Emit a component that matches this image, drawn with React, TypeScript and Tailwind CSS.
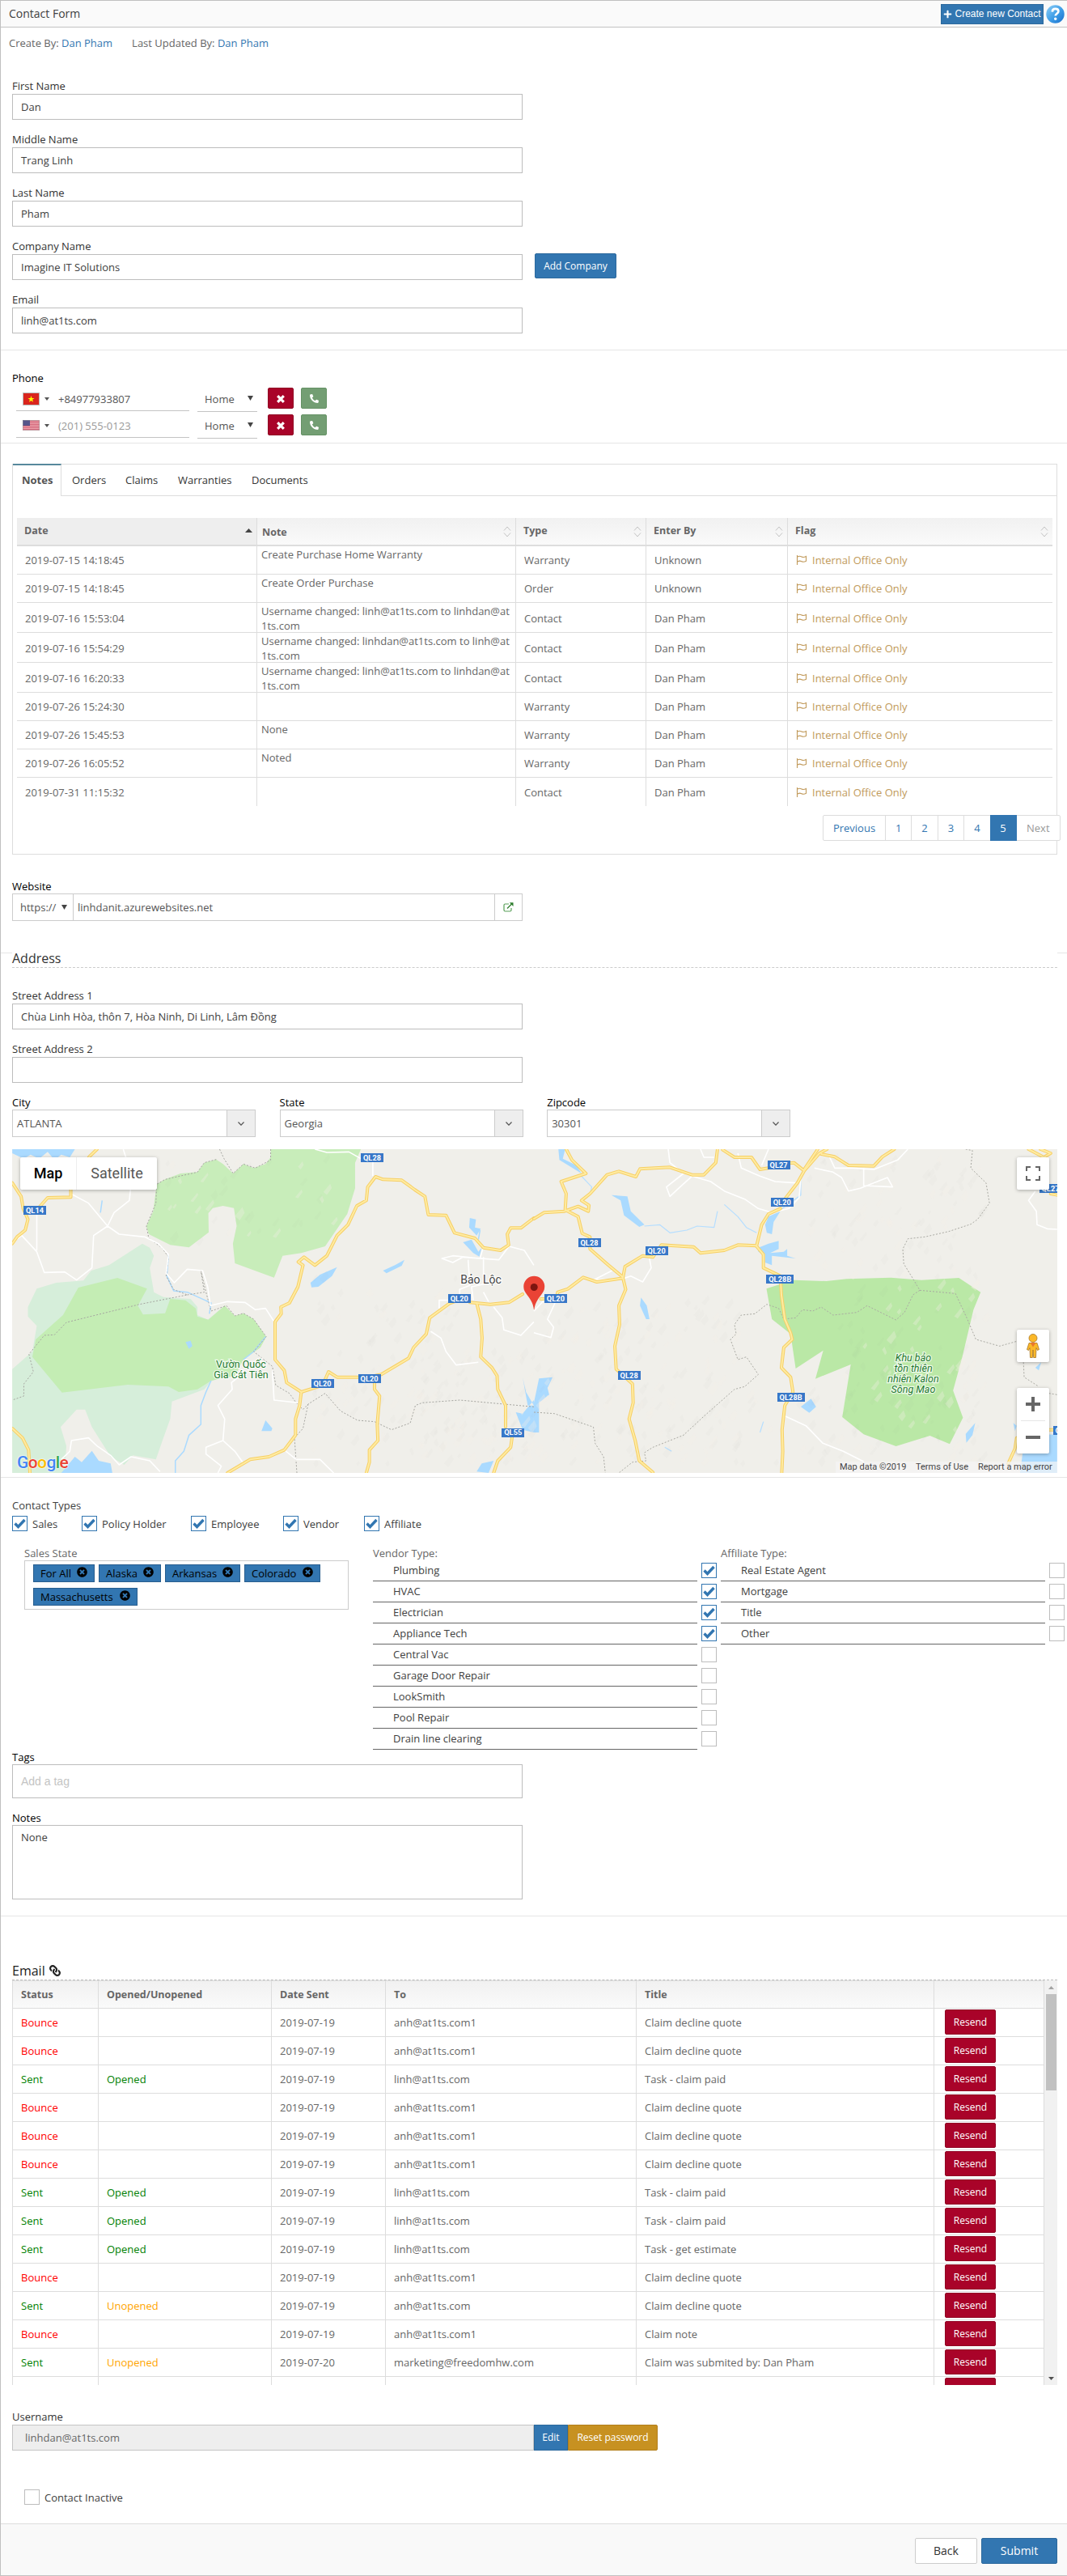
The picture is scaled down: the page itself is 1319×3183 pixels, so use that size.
import React from "react";
import { FaPlus, FaPhoneAlt, FaCheck, FaTimesCircle, FaLink } from "react-icons/fa";

const Caret = ({ className = "" }: { className?: string }) => (
  <svg className={className} width="7" height="6" viewBox="0 0 7 6">
    <path d="M0 0h7L3.5 6z" fill="#444" />
  </svg>
);

function Field({ label, value = "", children }: { label: string; value?: string; children?: React.ReactNode }) {
  return (
    <div className="h-[66px]">
      <div className="h-[19px] leading-[18px] text-[#333]">{label}</div>
      <div className="flex">
        <div className="h-8 w-[631px] border border-[#bdbdbd] bg-white px-2.5 leading-[31px] text-[#404040]">{value}</div>
        {children}
      </div>
    </div>
  );
}

const Hr = () => <div className="h-px bg-[#e5e5e5]" />;

function VietnamFlag() {
  return (
    <svg width="21" height="16" viewBox="0 0 21 16">
      <rect x=".5" y=".5" width="20" height="15" fill="#da251d" stroke="#b9b9b9" />
      <path d="M10.500 4.100l1 2.900h3l-2.400 1.800.9 2.900-2.500-1.800L8 11.700l.9-2.900-2.400-1.800h3z" fill="#ff0" />
    </svg>
  );
}

function UsFlag() {
  return (
    <svg width="21" height="13" viewBox="0 0 21 13">
      <rect width="21" height="13" fill="#eda5ae" />
      {[1, 3, 5, 7, 9, 11].map((y) => (
        <path key={y} d={`M0 ${y + 0.5}h21`} stroke="#d3667a" />
      ))}
      <rect width="9" height="7" fill="#55558a" />
      <rect x=".5" y=".5" width="20" height="12" fill="none" stroke="#9a9a9a" strokeOpacity=".5" />
    </svg>
  );
}

function PhoneRow({ flag, value, muted = false }: { flag: React.ReactNode; value: string; muted?: boolean }) {
  return (
    <div className="flex h-[33px] items-start pl-[5px]">
      <div className="flex h-[29px] w-[214px] items-center border-b border-[#c4c4c4] pb-px pl-2">
        {flag}
        <svg width="6" height="4" viewBox="0 0 6 4" className="ml-[6px]"><path d="M0 0h6L3 4z" fill="#555" /></svg>
        <span className={`ml-[11px] ${muted ? "text-[#999]" : "text-[#555]"}`}>{value}</span>
      </div>
      <div className="ml-2.5 flex h-[30px] w-[74px] items-center justify-between border-b border-[#c4c4c4] pr-[5px] pb-0.5 pl-[9px] text-[#555]">
        <span>Home</span>
        <Caret className="-mt-px" />
      </div>
      <div className="ml-[13px] flex h-[26px] w-8 items-center justify-center rounded-[2px] border border-[#900323] bg-[#a90329]">
        <svg width="10" height="10" viewBox="0 0 10 10" className="mt-0.5" stroke="#fff" strokeWidth="3.200"><path d="M1.200 1.200l7.600 7.600M8.800 1.200L1.200 8.800" /></svg>
      </div>
      <div className="ml-[9px] flex h-[26px] w-8 items-center justify-center rounded-[2px] border border-[#659265] bg-[#739e73] text-white">
        <FaPhoneAlt size={11} className="-scale-100 rotate-180" />
      </div>
    </div>
  );
}

const Flag = () => (
  <svg width="14" height="12" viewBox="0 0 14 12" fill="none" stroke="#c19a5b">
    <path d="M1.500 0v12M2 2c2-1.400 3.500-.8 5 0s3 .8 5.500-.5v5.800c-2.500 1.300-4 1.200-5.500.4S4 6.600 2 8" strokeWidth="1.100" />
  </svg>
);

const SortBoth = () => (
  <svg width="10" height="14" viewBox="0 0 10 14" fill="none" stroke="#c4c4c4">
    <path d="M1 5.500l4-4.500 4 4.500M1 8.500l4 4.500 4-4.500" />
  </svg>
);

const notes: [string, string, string, string][] = [
  ["2019-07-15 14:18:45", "Create Purchase Home Warranty", "Warranty", "Unknown"],
  ["2019-07-15 14:18:45", "Create Order Purchase", "Order", "Unknown"],
  ["2019-07-16 15:53:04", "Username changed: linh@at1ts.com to linhdan@at1ts.com", "Contact", "Dan Pham"],
  ["2019-07-16 15:54:29", "Username changed: linhdan@at1ts.com to linh@at1ts.com", "Contact", "Dan Pham"],
  ["2019-07-16 16:20:33", "Username changed: linh@at1ts.com to linhdan@at1ts.com", "Contact", "Dan Pham"],
  ["2019-07-26 15:24:30", "", "Warranty", "Dan Pham"],
  ["2019-07-26 15:45:53", "None", "Warranty", "Dan Pham"],
  ["2019-07-26 16:05:52", "Noted", "Warranty", "Dan Pham"],
  ["2019-07-31 11:15:32", "", "Contact", "Dan Pham"],
];

const noteGrid = "grid grid-cols-[296px_320px_161px_175px_328px]";

function NotesPanel() {
  return (
    <div className="mx-[15px] h-[483px] w-[1292px] border border-[#ddd]">
      <div className="flex h-[39px]">
        <div className="-mt-px h-10 w-[60px] border-t-2 border-r border-t-[#57889c] border-r-[#ddd] pl-[11px] leading-[37px] font-bold text-[#555]">Notes</div>
        <div className="flex flex-1 border-b border-[#ddd] pl-[13px] leading-[39px] text-[#333]">
          <span className="w-[66px]">Orders</span>
          <span className="w-[65px]">Claims</span>
          <span className="w-[91px]">Warranties</span>
          <span>Documents</span>
        </div>
      </div>
      <div className="mt-[27px] ml-[5px] w-[1280px] text-[#666]">
        <div className={`${noteGrid} h-[35px] border-b-2 border-[#ddd] bg-gradient-to-b from-[#f1f1f1] to-[#fafafa] text-[12.5px] font-bold`}>
          <div className="flex items-center justify-between bg-[#eee] pr-[5px] pl-[9px]">
            <span className="-mt-px">Date</span>
            <svg width="9" height="5" viewBox="0 0 9 5" className="-mt-[3px]"><path d="M4.500 0L9 5H0z" fill="#444" /></svg>
          </div>
          {["Note", "Type", "Enter By", "Flag"].map((h, i) => (
            <div key={h} className={`flex items-center justify-between border-l border-[#ddd] pr-[5px] ${i === 0 ? "pl-1.5" : "pl-[9px]"}`}>
              <span className={i === 0 ? "pt-[3px]" : "-mt-px"}>{h}</span>
              <SortBoth />
            </div>
          ))}
        </div>
        {notes.map(([date, note, type, by], i) => (
          <div key={i} className={`${noteGrid} ${i >= 2 && i <= 4 ? "h-[37px]" : "h-[35px]"} ${i < 8 ? "border-b border-[#ddd]" : ""}`}>
            <div className="flex items-center pl-2.5">{date}</div>
            <div className="border-l border-[#ddd] pt-px pr-1.5 pl-[5px] leading-[18px] break-all">{note}</div>
            <div className="flex items-center border-l border-[#ddd] pl-2.5">{type}</div>
            <div className="flex items-center border-l border-[#ddd] pl-2.5">{by}</div>
            <div className="flex items-center gap-1.5 border-l border-[#ddd] pl-2.5 text-[#c19a5b]">
              <Flag />
              Internal Office Only
            </div>
          </div>
        ))}
      </div>
      <div className="relative mt-[11px] ml-[1001px] flex h-8 w-[294px] rounded-[2px] border border-[#ddd] bg-white text-center leading-[31px] text-[#3276b1]">
        <span className="w-[76px]">Previous</span>
        {["1", "2", "3", "4"].map((n) => (
          <span key={n} className="w-[32.4px] border-l border-[#ddd]">{n}</span>
        ))}
        <span className="-my-px w-[33px] bg-[#3276b1] leading-[33px] text-white">5</span>
        <span className="flex-1 text-[#999]">Next</span>
      </div>
    </div>
  );
}

/* ---------- map ---------- */

// Faint relief shading: [x0, y0, width, height, count]
const reliefZones = [
  [370, 160, 190, 230, 110],
  [500, 250, 150, 140, 90],
  [650, 190, 250, 200, 160],
  [980, 10, 220, 150, 90],
  [1020, 170, 180, 180, 90],
  [900, 300, 300, 90, 50],
  [180, 10, 230, 110, 40],
];

const relief = (() => {
  let s = 7;
  const r = () => ((s = (s * 16807) % 2147483647) / 2147483647);
  const out: { d: string; light: boolean }[] = [];
  for (const [x, y, w, h, n] of reliefZones)
    for (let i = 0; i < n; i++) {
      const px = x + r() * w;
      const py = y + r() * h;
      const a = 3 + r() * 7;
      const b = 2 + r() * 4;
      out.push({ d: `M${px.toFixed(1)} ${py.toFixed(1)}l${a.toFixed(1)} ${(-a * 1.2).toFixed(1)}l${(b / 2).toFixed(1)} ${(b * 1.3).toFixed(1)}l${(-a * 0.7).toFixed(1)} ${a.toFixed(1)}z`, light: r() > 0.6 });
    }
  return out;
})();

const shields: [number, number, string][] = [
  [445, 10.7, "QL28"], [28, 75.7, "QL14"], [552.8, 184.7, "QL20"], [383.6, 289.3, "QL20"], [441.6, 283.3, "QL20"], [619.3, 350, "QL55"],
  [947.6, 19.7, "QL27"], [951.8, 65.7, "QL20"], [713.5, 115.7, "QL28"], [796.7, 125.7, "QL20"], [949.3, 160.7, "QL28B"], [671.9, 184.7, "QL20"],
  [762.7, 279.3, "QL28"], [962.7, 306.3, "QL28B"], [1283.5, 48.3, "QL27"], [1301, 347.3, "QL1A"],
];

const roadsLeft = [
  "M285 60L262 88 250 120M208 205L208 238 140 240 108 285M36 185L62 235 68 280 82 320 74 360 50 385 36 410",
  "M36 1095L66 1130 84 1175 88 1260",
  "M1568 315L1530 352 1500 352 1490 375 1494 415 1470 435 1420 425 1395 390 1335 370 1310 305 1258 303 1248 235 1218 210 1180 175 1125 172 1103 162 1080 200 1076 250 1048 270 1022 340 990 380 960 455 925 490 893 460 876 478 890 490 875 570 850 630 825 645 826 670 808 700 808 840 835 880 842 925 885 960 935 940",
  "M885 960L880 1010 868 1060 868 1120 835 1175 790 1200 735 1210 668 1260",
  "M950 928L965 885 990 905 1080 905 1120 895 1200 835 1215 795 1252 745 1262 685 1320 632 1350 618",
  "M1380 628L1440 635 1495 628 1535 597M1400 630L1412 690 1416 760 1412 830 1445 870 1460 900 1462 950 1485 1010 1485 1090M1505 1120L1500 1165 1462 1215 1450 1260",
  "M1100 920L1100 950 1115 975 1108 1080 1110 1140 1085 1175 1085 1220 1076 1260",
];

const roadsRight = [
  "M0 318L30 295 90 290 130 272 160 290 162 268 140 250 165 225 215 155 250 142 300 162 312 133 400 127 465 155 500 155 535 110 540 60",
  "M95 60L112 100 153 150 80 180 95 225 92 285 130 310 142 372 165 385 165 430 215 485 262 535",
  "M262 535L268 495 320 455 350 460 375 415 470 422 490 445 560 435 600 415 655 418 670 340 690 300 725 280M735 250L775 185 795 140 840 75 862 60M795 140L765 110 750 112M690 130L665 135 640 90 590 90 555 62",
  "M845 78L885 88 925 120 1000 122 1025 88 1060 60M835 60L795 135",
  "M20 615L65 615 70 590 100 578 145 535 185 552 262 538 270 580 250 640 252 710 238 790 242 875 290 930 292 1000 280 1060 298 1140 310 1215 350 1258",
  "M655 420L675 450 675 500 725 530 728 600 738 690 755 740 760 765 735 795 728 870 755 905 762 960 738 1010 730 1100 732 1180 729 1260",
  "M1455 60L1500 90 1520 75 1490 60M1420 1130L1415 1170 1395 1225M1515 1100L1539 1100M1520 225L1539 230",
];

const minorLeft = [
  "M208 225L260 260 316 345 275 380 270 500 225 545 190 515 130 517 108 440 64 380 36 405M108 300L108 435M316 345L335 295 380 250 384 200M316 345L350 375 425 385 465 410 495 450 488 520 512 555 550 505 595 510 610 570 618 640 668 625 720 628 750 655 780 650 808 705",
  "M362 60L372 100 372 130M1095 160L1095 100 1060 95 1025 70 960 72 925 60M1568 490L1540 435 1495 420 1465 470 1360 460 1330 480 1298 465 1330 455 1410 465 1420 420M1375 470L1380 565 1350 580 1350 620 1290 620 1290 650M1420 460L1420 560 1385 570 1390 620M1420 590L1435 625",
  "M1265 735L1295 760 1310 810 1340 860 1405 850M1450 645L1475 685 1480 730 1530 750 1568 700M720 885L680 925 682 950 640 1010 660 1060 655 1140 605 1165 605 1190 650 1235 640 1260M655 1140L690 1180 715 1225M800 880L805 990 875 1000M835 1175L870 1210 940 1210 980 1260",
  "M180 1210L205 1180 210 1140 260 1130 285 1160 325 1195 350 1230 385 1200 440 1215 470 1255",
];
const minorRight = [
  "M395 60L400 110 440 150 390 200 400 235 430 200 465 160 520 180 560 215 620 245 660 280 700 295 750 280 780 240 785 170M600 75L610 130 665 160 710 180 770 185M690 60L670 120",
  "M490 60L500 90 530 90M825 130L880 145 905 165 925 215 960 205 1040 165 1055 200 970 195 970 130M870 90L885 130 940 130 1000 135 1070 100 1100 60",
  "M340 465L345 500 320 552 285 530 262 540M262 540L175 545 230 510M0 660L30 620M62 630L40 690 58 720 50 758 0 740M740 1050L800 1085 850 1150 910 1180 970 1218M1475 215L1455 250 1478 290 1480 340 1510 355 1539 357",
];

const waterLeft = [
  "M36 75L70 95 90 80 115 95 140 70 160 100 180 80 205 90 220 60 36 60z",
  "M180 1260L220 1200 240 1220 270 1178 290 1215 325 1225 330 1260z",
  "M912 555L940 525 990 497 975 530 935 570 915 572zM1125 510L1160 490 1188 470 1180 492 1135 520zM780 1065L800 1095 797 1105 768 1105zM545 775L555 800 565 790 560 770z",
  "M1360 405L1385 395 1405 440 1415 425 1408 458 1390 445zM1380 315L1398 320 1395 350 1412 355 1400 380 1378 350zM1568 990L1535 1040 1515 1035 1535 1100 1568 1110zM1400 1255L1415 1225 1450 1215 1435 1260zM1535 905L1545 960 1568 1010 1550 1010z",
];
const waterRight = [
  "M228 230L275 235 285 290 325 340 310 348 265 305 255 250zM72 60L92 60 85 95 125 120 140 150 75 100zM315 610L332 640 340 690 330 690 312 640z",
  "M690 310L725 290 705 330 700 375 685 370 680 340zM660 425L690 410 720 400 720 430 695 445 735 440 745 430 745 455 770 465 700 455 700 490 680 480 680 450 660 440z",
  "M15 910L55 905 40 945 45 970 15 1000 15 1110 0 1110 0 1000zM785 1015L815 985 830 1015 810 1037zM1445 1115L1539 1118 1539 1260 1430 1260zM1270 1115L1298 1075 1290 1120 1272 1148zM1475 870L1492 850 1485 880zM1410 1075L1420 1085 1415 1105z",
];

const roadSet = (ds: string[], key: string) => (
  <g fill="none" strokeLinejoin="round" strokeLinecap="round">
    {ds.map((d, i) => <path key={key + "a" + i} d={d} stroke="#f6cf65" strokeWidth="4" vectorEffect="non-scaling-stroke" />)}
    {ds.map((d, i) => <path key={key + "b" + i} d={d} stroke="#ffeba1" strokeWidth="2" vectorEffect="non-scaling-stroke" />)}
  </g>
);
const lineSet = (ds: string[], stroke: string, width: number, dash?: string) => (
  <g fill="none" stroke={stroke} strokeWidth={width} strokeDasharray={dash} strokeLinejoin="round">
    {ds.map((d, i) => <path key={i} d={d} vectorEffect="non-scaling-stroke" />)}
  </g>
);

function MapDrawing() {
  return (
    <svg width="1292" height="400" viewBox="0 0 1292 400" className="block" fontFamily="Roboto, sans-serif">
      <rect width="1292" height="400" fill="#f0efea" />
      <g transform="translate(-15 -20) scale(.42087 .33333)">
        <path d="M418 410L440 425 452 455 440 500 452 590 480 608 560 615 580 645 580 675 610 692 660 640 700 880 620 920 600 950 505 995 500 1060 480 1130 458 1210 390 1195 365 1230 325 1200 300 1150 270 1090 250 1025 225 1025 178 1090 195 1160 190 1260 36 1260 36 875 95 810 108 715 82 680 82 645 108 577 165 555 245 547 268 510 320 490z" fill="#d6eeda" />
        <path d="M345 537L432 577 405 640 420 673 485 668 500 615 545 620 575 650 580 680 612 692 660 640 690 678 715 668 745 690 782 755 765 795 715 840 690 900 620 918 580 950 525 960 495 940 375 933 182 962 95 830 105 765 185 675 230 573z" fill="#c4edb4" />
        <path d="M795 60L1060 60 1043 110 1043 205 1020 300 955 420 885 445 830 455 805 536 690 483 684 410 695 345 687 278 655 270 625 278 612 297 613 368 555 424 500 415 437 375 430 345 450 290 460 190 485 172 530 150 580 145 600 110 635 98 655 115 685 150 715 115 745 130 780 115 795 90z" fill="#c8edba" />
        {waterLeft.map((d, i) => <path key={i} d={d} fill="#aadaff" />)}
        {lineSet(["M620 918L605 960 590 1010 590 1080 555 1120 540 1180 515 1215 515 1260", "M495 450L490 530 510 585 550 590 620 630 615 670M295 295L300 250", "M1410 360L1405 395M780 755L745 810 715 840"], "#aadaff", 1.5)}
      </g>
      <g transform="translate(645 -20) scale(.42027 .33333)">
        <path d="M684 577L725 560 765 545 860 549 920 541 1050 536 1140 545 1250 537 1314 590 1293 655 1260 830 1233 955 1262 1055 1223 1153 1165 1122 1065 1161 970 1117 907 1053 932 858 828 911 851 806 770 873 755 745 700 690z" fill="#bae8a6" />
        {waterRight.map((d, i) => <path key={i} d={d} fill="#aadaff" />)}
        {lineSet(["M325 345L370 340 400 370 450 360 480 345 530 350 540 290M560 265L600 310 625 350 655 370M140 160L170 200 165 230M785 170L785 230 725 285", "M675 1070L665 1110M385 1165L405 1180"], "#b5deff", 1.2)}
      </g>
      {relief.map((t, i) => <path key={i} d={t.d} fill={t.light ? "#f6efe8" : "#777"} fillOpacity={t.light ? 0.3 : 0.022} />)}
      <g transform="translate(-15 -20) scale(.42087 .33333)">
        {lineSet(["M645 60L658 95 685 150 715 115 750 130 795 100 795 60M635 98L600 110 580 145 485 172 460 190 458 260 430 345 437 390 475 425 495 460 488 530 510 580 550 600 410 635 195 702 160 748 130 750 85 820 98 885 70 930 70 975 36 990M550 600L600 590 590 510 605 590 620 660 665 640 690 678 715 668 745 690 782 755 745 810 800 865 810 935 850 965 870 1000 890 1025 905 1005 955 965 1000 1030 1050 1065 1100 1070 1150 1100 1205 1075 1220 1010 1240 1000 1350 990 1568 1015M905 1005L890 1095 865 1130 872 1260"], "#a5a5a0", 1, "2 2")}
        {lineSet(minorLeft, "#fff", 1.6)}
        {roadSet(roadsLeft, "l")}
      </g>
      <g transform="translate(645 -20) scale(.42027 .33333)">
        {lineSet(["M1270 60L1290 65 1285 130 1330 185 1340 260 1305 320 1285 338 1220 365 1150 385 1100 392 1085 430 1088 485 1115 540 1135 583 1240 595 1275 690 1300 765 1370 790 1440 765M1135 583L1115 600 1090 665 1065 693 980 640 950 665 880 675 845 645 820 660 790 655 770 685 735 690 720 650 685 635 650 670 610 675 590 710 595 745 578 765 600 840 625 830 660 895 620 940 590 950 500 1050 440 1120 350 1165 325 1185 330 1215 290 1220 250 1260M0 1035L60 1040 175 1090 180 1150 205 1200 210 1260M1440 850L1442 905 1485 940M1515 965L1539 970"], "#a9a9a2", 1, "2 2")}
        {lineSet(minorRight, "#fff", 1.6)}
        {roadSet(roadsRight, "r")}
      </g>
      {shields.map(([x, y, t], i) => {
        const w = t === "QL28B" ? 34 : 28;
        return (
          <g key={i}>
            <rect x={Math.round(x - w / 2)} y={Math.round(y - 5.5)} width={w} height="11" fill="#3777c8" />
            <text x={x} y={y + 3.3} textAnchor="middle" fontSize="9.2" fontWeight="700" fill="#fff" letterSpacing=".1">{t}</text>
          </g>
        );
      })}
      <g fill="#1f7a30" stroke="#fff" strokeOpacity=".75" strokeWidth="2.500" paintOrder="stroke" textAnchor="middle" fontSize="12.500">
        <text x="283" y="269.500">Vườn Quốc</text>
        <text x="283" y="282.500">Gia Cát Tiên</text>
        <g fontStyle="italic">
          <text x="1114" y="261.500">Khu bảo</text>
          <text x="1114" y="274.500">tồn thiên</text>
          <text x="1114" y="287.500">nhiên Kalon</text>
          <text x="1114" y="300.500">Sông Mao</text>
        </g>
      </g>
      <text x="579.500" y="166" textAnchor="middle" fontSize="14" fill="#444" stroke="#fff" strokeOpacity=".8" strokeWidth="2.500" paintOrder="stroke">Bảo Lộc</text>
      <path d="M645 198.500c-1-10-6-15-10.500-21.500a13 13 0 1 1 21.500 0C651.500 183.500 646.500 188.500 645.300 198.500z" fill="#ea4335" />
      <circle cx="645.200" cy="170.500" r="4.500" fill="#7d1510" />
    </svg>
  );
}

function MapPanel() {
  const card = "rounded-[2px] bg-white shadow-[0_1px_4px_rgba(0,0,0,0.3)]";
  return (
    <div className="relative mx-[15px] mt-[15px] h-[400px] w-[1292px] overflow-hidden font-[Roboto,sans-serif]">
      <MapDrawing />
      <div className={`${card} absolute top-2.5 left-2.5 flex h-10 text-center text-[18px] leading-10`}>
        <span className="w-[70px] border-r border-[#eee] font-medium text-black">Map</span>
        <span className="w-[99px] text-[#565656]">Satellite</span>
      </div>
      <div className={`${card} absolute top-2.5 right-2.5 flex h-10 w-10 items-center justify-center`}>
        <svg width="18" height="18" viewBox="0 0 18 18" fill="none" stroke="#666" strokeWidth="2"><path d="M1 6V1h5M12 1h5v5M17 12v5h-5M6 17H1v-5" /></svg>
      </div>
      <div className={`${card} absolute top-[223px] right-2.5 flex h-10 w-10 items-center justify-center`}>
        <svg width="18" height="30" viewBox="0 0 18 30" fill="#fbb829" stroke="#a6772a" strokeWidth=".8">
          <path d="M4 11.500h10l2.500 8-2 1-1.500-3-.5 12H9.700L9 20l-.7 9.500H5.500l-.5-12-1.500 3-2-1z" />
          <circle cx="9" cy="5.500" r="5" />
          <path d="M5.500 11h7L9 16.500z" fill="#e8772e" stroke="none" />
        </svg>
      </div>
      <div className={`${card} absolute top-[295px] right-2.5 flex h-[81px] w-10 flex-col items-center`}>
        <svg width="40" height="81" viewBox="0 0 40 81" stroke="#666" strokeWidth="4"><path d="M11 20h18M20 11v18M11 61h18" /><path d="M5 40.500h30" stroke="#e6e6e6" strokeWidth="1" /></svg>
      </div>
      <div className="absolute bottom-0 left-[6px] text-[21px] leading-[26px] font-medium tracking-[-0.6px] [text-shadow:0_0_2px_#fff,0_0_2px_#fff]">
        <span className="text-[#4285f4]">G</span><span className="text-[#ea4335]">o</span><span className="text-[#fbbc05]">o</span><span className="text-[#4285f4]">g</span><span className="text-[#34a853]">l</span><span className="text-[#ea4335]">e</span>
      </div>
      <div className="absolute right-0 bottom-0 flex h-3.5 bg-[#f5f5f5]/70 text-[11px] leading-[14px] whitespace-nowrap text-[#444]">
        <span className="w-[94px] pl-[5px]">Map data ©2019</span>
        <span className="w-[77px] pl-[5px]">Terms of Use</span>
        <span className="w-[103px] pl-[5px]">Report a map error</span>
      </div>
    </div>
  );
}

/* ---------- contact types ---------- */

function Check({ on }: { on: boolean }) {
  return (
    <span className={`flex h-[19px] w-[19px] shrink-0 items-center justify-center border bg-white text-[#3276b1] ${on ? "border-[#3276b1]" : "border-[#bdbdbd]"}`}>
      {on && (
        <svg width="15" height="13" viewBox="0 0 15 13" fill="none" stroke="currentColor" strokeWidth="3.400"><path d="M1.500 6.500l4 4L13.500 2" /></svg>
      )}
    </span>
  );
}

function TypeList({ title, items, checked }: { title: string; items: string[]; checked: number }) {
  return (
    <div className="w-[430px] shrink-0">
      <div className="h-[18px] leading-[18px]">{title}</div>
      {items.map((t, i) => (
        <div key={t} className="flex h-[26px]">
          <div className="h-[26px] w-[401px] border-b border-[#666] pl-[25px] leading-[25px] text-[#404040]">{t}</div>
          <div className="pt-[3px] pl-[5px]"><Check on={i < checked} /></div>
        </div>
      ))}
    </div>
  );
}

const Chip = ({ text, width }: { text: string; width: string }) => (
  <span className={`flex h-[22px] items-center justify-between border border-[#285e8e] bg-[#3276b1] pr-2 pl-2 text-black ${width}`}>
    {text}
    <FaTimesCircle size={13} className="-mt-1" />
  </span>
);

/* ---------- email table ---------- */

const S = "Sent";
const B = "Bounce";
const emails: [string, string, string, string, string][] = [
  [B, "", "2019-07-19", "anh@at1ts.com1", "Claim decline quote"],
  [B, "", "2019-07-19", "anh@at1ts.com1", "Claim decline quote"],
  [S, "Opened", "2019-07-19", "linh@at1ts.com", "Task - claim paid"],
  [B, "", "2019-07-19", "anh@at1ts.com1", "Claim decline quote"],
  [B, "", "2019-07-19", "anh@at1ts.com1", "Claim decline quote"],
  [B, "", "2019-07-19", "anh@at1ts.com1", "Claim decline quote"],
  [S, "Opened", "2019-07-19", "linh@at1ts.com", "Task - claim paid"],
  [S, "Opened", "2019-07-19", "linh@at1ts.com", "Task - claim paid"],
  [S, "Opened", "2019-07-19", "linh@at1ts.com", "Task - get estimate"],
  [B, "", "2019-07-19", "anh@at1ts.com1", "Claim decline quote"],
  [S, "Unopened", "2019-07-19", "anh@at1ts.com", "Claim decline quote"],
  [B, "", "2019-07-19", "anh@at1ts.com1", "Claim note"],
  [S, "Unopened", "2019-07-20", "marketing@freedomhw.com", "Claim was submited by: Dan Pham"],
];

const emailGrid = "grid grid-cols-[106px_214px_141px_310px_368px_136px]";
const cell = "border-l border-[#ddd] pl-2.5";
const Resend = () => (
  <div className="mt-px ml-[3px] h-[31px] w-[63px] rounded-[2px] border border-[#900323] bg-[#a90329] text-center text-[12px] leading-[29px] text-white">Resend</div>
);

function EmailTable() {
  return (
    <div className="flex h-[500px] w-[1292px] overflow-hidden text-[#666]">
      <div className="w-[1275px]">
        <div className={`${emailGrid} h-[35px] border-t border-b border-[#ddd] bg-gradient-to-b from-[#f1f1f1] to-[#fafafa] text-[12.5px] leading-[33px] font-bold`}>
          {["Status", "Opened/Unopened", "Date Sent", "To", "Title", ""].map((h) => <div key={h} className={cell}>{h}</div>)}
        </div>
        {emails.map(([st, op, date, to, title], i) => (
          <div key={i} className={`${emailGrid} h-[35px] border-b border-[#ddd] leading-[35px]`}>
            <div className={`${cell} ${st === S ? "text-[#008000]" : "text-[#ff0000]"}`}>{st}</div>
            <div className={`${cell} ${op === "Opened" ? "text-[#008000]" : "text-[#ffa500]"}`}>{op}</div>
            <div className={cell}>{date}</div>
            <div className={cell}>{to}</div>
            <div className={cell}>{title}</div>
            <div className={cell}><Resend /></div>
          </div>
        ))}
        <div className={`${emailGrid} h-[35px]`}>
          {[0, 1, 2, 3, 4].map((k) => <div key={k} className={cell} />)}
          <div className={cell}><Resend /></div>
        </div>
      </div>
      <div className="flex w-[17px] flex-col items-center justify-between border-l border-[#ddd] bg-[#f1f1f1]">
        <div className="flex flex-col items-center">
          <div className="flex h-[17px] items-center"><svg width="7" height="4" viewBox="0 0 7 4"><path d="M3.500 0L7 4H0z" fill="#a3a3a3" /></svg></div>
          <div className="h-[119px] w-[13px] bg-[#c1c1c1]" />
        </div>
        <div className="flex h-[17px] items-center"><svg width="7" height="4" viewBox="0 0 7 4"><path d="M0 0h7L3.500 4z" fill="#505050" /></svg></div>
      </div>
    </div>
  );
}

function Combo({ label, value }: { label: string; value: string }) {
  return (
    <div className="w-[301px]">
      <div className="h-[17px] leading-[17px] text-black">{label}</div>
      <div className="flex h-[34px] border border-[#ccc] leading-[33px] text-[#555]">
        <span className="flex-1 pl-[5px]">{value}</span>
        <span className="flex w-[35px] items-center justify-center border-l border-[#ccc] bg-[#eee]">
          <svg width="8" height="5" viewBox="0 0 8 5" fill="none" stroke="#555" strokeWidth="1.200"><path d="M.5.5L4 4.200 7.500.5" /></svg>
        </span>
      </div>
    </div>
  );
}

export default function App() {
  return (
    <div className="h-[3183px] w-[1319px] overflow-hidden border-t border-l border-[#c0c0c0] bg-white font-['Open_Sans',sans-serif] text-[13px] leading-[18px] text-[#666]">
      <div className="-ml-px">
        <header className="ml-px flex h-[33px] items-center border-b border-[#c2c2c2] bg-[#fafafa] pr-[3px] pl-2.5">
          <h1 className="flex-1 text-[14px] text-[#404040]">Contact Form</h1>
          <div className="flex h-[25px] w-[127px] items-center justify-center gap-[3px] border border-[#2c699d] bg-[#3276b1] font-['Liberation_Sans',sans-serif] text-[12px] whitespace-nowrap text-white">
            <FaPlus size={11} />
            Create new Contact
          </div>
          <svg className="ml-[3px]" width="23" height="23" viewBox="0 0 23 23">
            <defs>
              <linearGradient id="help" x1="0" y1="0" x2="1" y2="1"><stop offset="0" stopColor="#8fd0f8" /><stop offset=".55" stopColor="#3c9be6" /><stop offset="1" stopColor="#1a6fcb" /></linearGradient>
            </defs>
            <circle cx="11.500" cy="11.500" r="11.200" fill="url(#help)" />
            <path d="M7.800 8.600C7.900 6 9.600 4.900 11.600 4.900c2.200 0 3.800 1.200 3.800 3.100 0 2.600-3.700 2.900-3.700 5.600" fill="none" stroke="#fff" strokeWidth="2.700" />
            <circle cx="11.700" cy="17.200" r="1.700" fill="#fff" />
          </svg>
        </header>

        <div className="flex h-[63px] gap-6 pt-2.5 pl-[11px]">
          <span>Create By: <span className="text-[#3276b1]">Dan Pham</span></span>
          <span>Last Updated By: <span className="text-[#3276b1]">Dan Pham</span></span>
        </div>

        <div className="h-[335px] pl-[15px]">
          <Field label="First Name" value="Dan" />
          <Field label="Middle Name" value="Trang Linh" />
          <Field label="Last Name" value="Pham" />
          <Field label="Company Name" value="Imagine IT Solutions">
            <div className="-mt-px ml-[15px] h-[31px] w-[101px] rounded-[2px] border border-[#2c699d] bg-[#3276b1] text-center text-[12px] leading-[30px] text-white">Add Company</div>
          </Field>
          <Field label="Email" value="linh@at1ts.com" />
        </div>
        <Hr />
        <div className="h-[114px] pt-[25px] pl-[15px]">
          <div className="h-[21px] text-black">Phone</div>
          <PhoneRow flag={<VietnamFlag />} value="+84977933807" />
          <PhoneRow flag={<UsFlag />} value="(201) 555-0123" muted />
        </div>
        <Hr />
        <div className="h-[25px]" />
        <NotesPanel />

        <div className="h-[121px] pt-[30px] pl-[15px]">
          <div className="h-[18px] text-black">Website</div>
          <div className="flex h-[34px] w-[631px] border border-[#ccc] leading-[33px] text-[#555]">
            <span className="flex w-[75px] items-center justify-between border-r border-[#ccc] pr-[7px] pl-[9px]">https://<Caret /></span>
            <span className="flex-1 pl-[5px]">linhdanit.azurewebsites.net</span>
            <span className="flex w-[34px] items-center justify-center border-l border-[#ccc]">
              <svg width="13" height="12" viewBox="0 0 13 12" fill="none" stroke="#58a058" strokeWidth="1.200">
                <path d="M7 2H2.500Q1 2 1 3.500v6Q1 11 2.500 11h6Q10 11 10 9.500V7" />
                <path d="M5 7.500L11 1.500" stroke="#2d7d2d" />
                <path d="M7.800.2H12.500V5z" fill="#2d7d2d" stroke="none" />
              </svg>
            </span>
          </div>
        </div>
        <div className="flex h-[19px]">
          <div className="h-px w-[15px] bg-[#e5e5e5]" />
          <h2 className="h-[19px] w-[1292px] border-b border-dashed border-[#ccc] text-[16px] leading-[14px] text-[#333]">Address</h2>
          <div className="h-px flex-1 bg-[#e5e5e5]" />
        </div>
        <div className="h-[158px] pt-[25px] pl-[15px]">
          <Field label="Street Address 1" value="Chùa Linh Hòa, thôn 7, Hòa Ninh, Di Linh, Lâm Đồng" />
          <Field label="Street Address 2" />
        </div>
        <div className="flex gap-[29.6px] pl-[15px]">
          <Combo label="City" value="ATLANTA" />
          <Combo label="State" value="Georgia" />
          <Combo label="Zipcode" value="30301" />
        </div>
        <MapPanel />
        <div className="h-[5px]" />
        <Hr />

        <div className="h-[84px] pt-[25px] pl-[15px] text-[#404040]">
          <div className="h-[22px]">Contact Types</div>
          <div className="flex items-center">
            {([["Sales", "w-[86px]"], ["Policy Holder", "w-[135px]"], ["Employee", "w-[114px]"], ["Vendor", "w-[100px]"], ["Affiliate", ""]] as const).map(([t, w]) => (
              <span key={t} className={`flex items-center gap-1.5 ${w}`}><Check on />{t}</span>
            ))}
          </div>
        </div>
        <div className="flex h-[252px] pl-[30px]">
          <div className="w-[431px] shrink-0">
            <div className="h-[18px]">Sales State</div>
            <div className="flex h-[61px] w-[401px] flex-wrap content-start gap-x-[5px] gap-y-[7px] border border-[#ccc] pt-1 pl-2.5">
              <Chip text="For All" width="w-[76px]" />
              <Chip text="Alaska" width="w-[77px]" />
              <Chip text="Arkansas" width="w-[93px]" />
              <Chip text="Colorado" width="w-[94px]" />
              <Chip text="Massachusetts" width="w-[129px]" />
            </div>
          </div>
          <TypeList title="Vendor Type:" checked={4} items={["Plumbing", "HVAC", "Electrician", "Appliance Tech", "Central Vac", "Garage Door Repair", "LookSmith", "Pool Repair", "Drain line clearing"]} />
          <TypeList title="Affiliate Type:" checked={0} items={["Real Estate Agent", "Mortgage", "Title", "Other"]} />
        </div>
        <div className="h-[205px] pl-[15px]">
          <div className="h-[18px] text-black">Tags</div>
          <div className="h-[42px] w-[631px] border border-[#bdbdbd] pl-2.5 font-['Liberation_Sans',sans-serif] text-[14px] leading-[41px] text-[#c4c4c4]">Add a tag</div>
          <div className="mt-[15px] h-[18px] text-black">Notes</div>
          <div className="h-[92px] w-[631px] border border-[#bdbdbd] pt-[5px] pl-2.5 text-[#404040]">None</div>
        </div>
        <Hr />

        <div className="h-[609px] pt-[55px] pl-[15px]">
          <h2 className="flex h-[24px] w-[1292px] items-center gap-[5px] border-b border-dashed border-[#bbb] text-[16px] text-[#222]">
            Email <FaLink size={14} className="-scale-x-100" />
          </h2>
          <EmailTable />
        </div>
        <div className="h-[141px] pl-[15px]">
          <div className="h-[19px] text-[#333]">Username</div>
          <div className="flex h-8 text-[12px] leading-[30px] text-white">
            <span className="w-[645px] border border-[#c4c4c4] bg-[#eee] pl-[15px] text-[13px] text-[#666]">linhdan@at1ts.com</span>
            <span className="w-[42px] border border-[#2c699d] bg-[#3276b1] text-center">Edit</span>
            <span className="w-[111px] rounded-r-[2px] border border-[#b37f1c] bg-[#c79121] text-center">Reset password</span>
          </div>
          <div className="mt-12 ml-[15px] flex items-center gap-1.5 text-[#404040]"><Check on={false} />Contact Inactive</div>
        </div>
        <footer className="ml-px flex h-[65px] items-start justify-end gap-[5px] border-t border-b border-t-[#ddd] border-b-[#c2c2c2] bg-[#f9f9f9] pt-[17px] pr-3 text-center text-[14px] leading-[30px]">
          <div className="h-8 w-[77px] rounded-[2px] border border-[#ccc] bg-white text-[#333]">Back</div>
          <div className="h-8 w-[94px] rounded-[2px] border border-[#2c699d] bg-[#3276b1] text-white">Submit</div>
        </footer>
      </div>
    </div>
  );
}
